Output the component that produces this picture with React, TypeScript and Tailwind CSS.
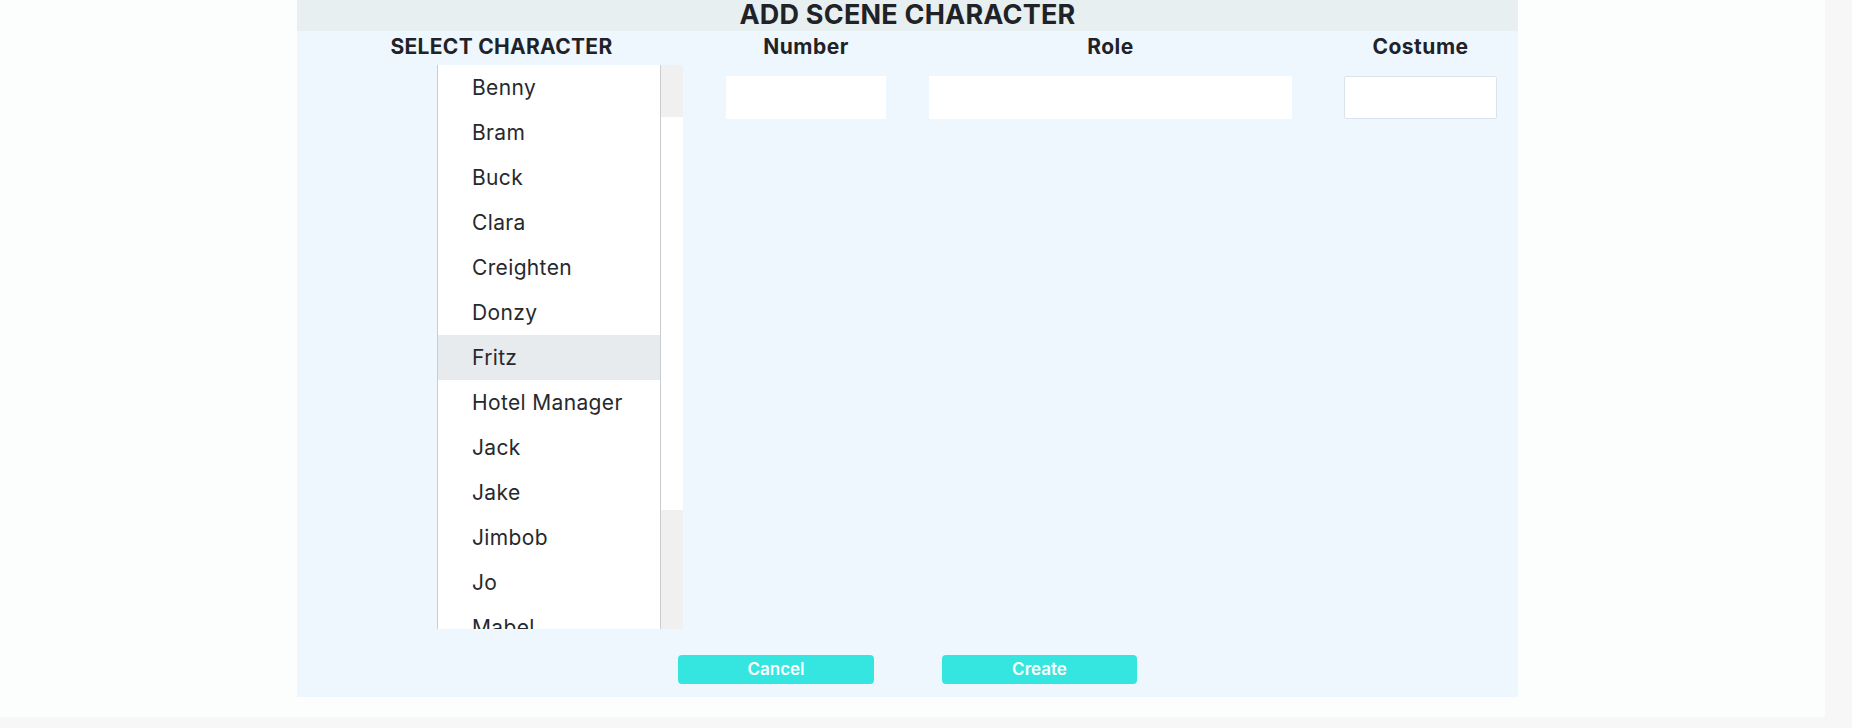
import { useState } from 'react';

const characters = [
  'Benny',
  'Bram',
  'Buck',
  'Clara',
  'Creighten',
  'Donzy',
  'Fritz',
  'Hotel Manager',
  'Jack',
  'Jake',
  'Jimbob',
  'Jo',
  'Mabel',
  'Mae',
  'Otto',
];

export default function App() {
  const [selected, setSelected] = useState('Fritz');
  const [number, setNumber] = useState('');
  const [role, setRole] = useState('');
  const [costume, setCostume] = useState('');

  return (
    <div
      className="flex h-[728px] w-[1852px] overflow-hidden bg-[#f7f7f7] text-[#1f2328]"
      style={{ fontFamily: 'Inter, "Noto Sans", sans-serif' }}
    >
      <div className="flex h-[717px] w-[1825px] bg-[#fbfefd] pl-[297px]">
        <div className="flex h-[697px] w-[1221px] flex-col bg-[#eff7fe]">
          <div className="h-[31px] bg-[#e7eff1] text-center text-[27px] font-bold leading-[29px] tracking-[0.2px]">
            ADD SCENE CHARACTER
          </div>

          <div className="flex">
            <div className="w-[409px]">
              <div className="text-center text-[21px] font-bold leading-[32px] tracking-[0.3px]">SELECT CHARACTER</div>
              <div className="ml-[140px] mt-[2px] flex h-[564px] w-[246px]">
                <ul className="h-full flex-1 overflow-hidden border-x border-[#c9ccd0] bg-white">
                  {characters.map((c) => (
                    <li
                      key={c}
                      onClick={() => setSelected(c)}
                      className={`h-[45px] cursor-pointer pl-[34px] text-[21px] leading-[46px] tracking-[0.35px] text-[#26292d] ${
                        selected === c ? 'bg-[#e8ebee]' : ''
                      }`}
                    >
                      {c}
                    </li>
                  ))}
                </ul>
                <div className="flex h-full w-[22px] flex-col">
                  <div className="h-[52px] bg-[#f0f0f0]" />
                  <div className="flex-1 bg-white" />
                  <div className="h-[119px] bg-[#f0f0f0]" />
                </div>
              </div>
            </div>

            <div className="ml-[20px] w-[160px]">
              <div className="text-center text-[21px] font-bold leading-[32px] tracking-[0.5px]">Number</div>
              <input
                value={number}
                onChange={(e) => setNumber(e.target.value)}
                aria-label="Number"
                className="mt-[13px] h-[43px] w-full bg-white px-2 outline-none"
              />
            </div>

            <div className="ml-[43px] w-[363px]">
              <div className="text-center text-[21px] font-bold leading-[32px] tracking-[0.5px]">Role</div>
              <input
                value={role}
                onChange={(e) => setRole(e.target.value)}
                aria-label="Role"
                className="mt-[13px] h-[43px] w-full bg-white px-2 outline-none"
              />
            </div>

            <div className="ml-[52px] w-[153px]">
              <div className="text-center text-[21px] font-bold leading-[32px] tracking-[0.5px]">Costume</div>
              <input
                value={costume}
                onChange={(e) => setCostume(e.target.value)}
                aria-label="Costume"
                className="mt-[13px] h-[43px] w-full rounded-[2px] border border-[#dce3ec] bg-white px-2 outline-none"
              />
            </div>
          </div>

          <div className="mt-[26px] flex pl-[381px]">
            <button className="h-[29px] w-[196px] rounded-[4px] bg-[#35e6e0] text-[17px] font-semibold leading-[29px] text-white">
              Cancel
            </button>
            <button className="ml-[68px] h-[29px] w-[195px] rounded-[4px] bg-[#35e6e0] text-[17px] font-semibold leading-[29px] text-white">
              Create
            </button>
          </div>
        </div>
      </div>
    </div>
  );
}
